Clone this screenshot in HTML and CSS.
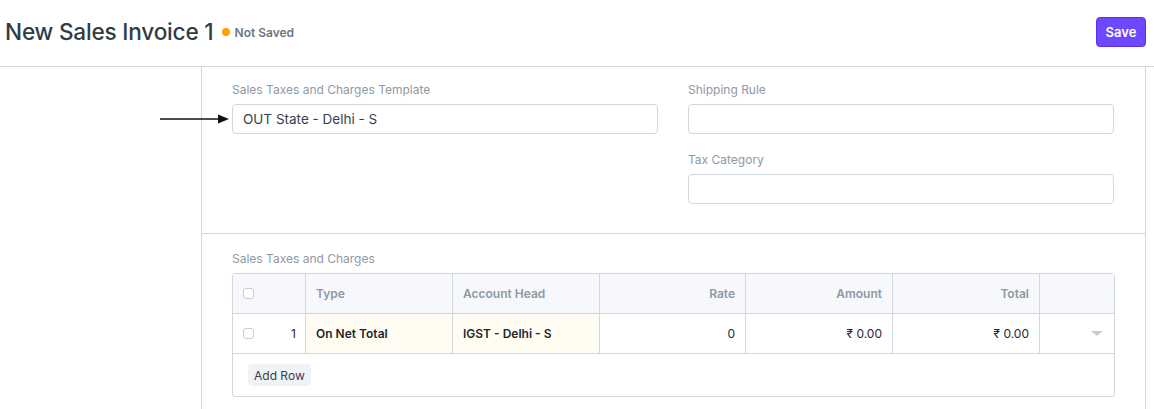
FILE: index.html
```html
<!DOCTYPE html>
<html>
<head>
<meta charset="utf-8">
<link rel="stylesheet" href="styles.css">
</head>
<body>
<div class="page">
  <header class="page-head">
    <div class="title-area">
      <h1 class="title">New Sales Invoice 1</h1>
      <span class="indicator"><span class="dot"></span>Not Saved</span>
    </div>
    <button class="btn-primary">Save</button>
  </header>
  <div class="layout">
    <aside class="sidebar"></aside>
    <main class="form">
      <section class="form-section cols">
        <div class="col">
          <div class="field">
            <label class="label">Sales Taxes and Charges Template</label>
            <div class="input">OUT State - Delhi - S</div>
          </div>
        </div>
        <div class="col">
          <div class="field">
            <label class="label">Shipping Rule</label>
            <div class="input"></div>
          </div>
          <div class="field">
            <label class="label">Tax Category</label>
            <div class="input"></div>
          </div>
        </div>
      </section>
      <section class="form-section">
        <label class="label">Sales Taxes and Charges</label>
        <div class="grid">
          <div class="grid-row head">
            <div class="cell cb"><span class="checkbox"></span></div>
            <div class="cell">Type</div>
            <div class="cell">Account Head</div>
            <div class="cell right">Rate</div>
            <div class="cell right">Amount</div>
            <div class="cell right">Total</div>
            <div class="cell"></div>
          </div>
          <div class="grid-row body">
            <div class="cell cb"><span class="checkbox"></span><span class="idx">1</span></div>
            <div class="cell req bold">On Net Total</div>
            <div class="cell req bold">IGST - Delhi - S</div>
            <div class="cell right">0</div>
            <div class="cell right">₹ 0.00</div>
            <div class="cell right">₹ 0.00</div>
            <div class="cell right"><span class="caret"></span></div>
          </div>
          <div class="grid-foot">
            <button class="btn-small">Add Row</button>
          </div>
        </div>
      </section>
    </main>
  </div>
  <svg class="arrow" width="72" height="12" viewBox="0 0 72 12">
    <line x1="0" y1="6" x2="60" y2="6" stroke="#111" stroke-width="1.6"/>
    <polygon points="58,1.5 69,6 58,10.5" fill="#111"/>
  </svg>
</div>
</body>
</html>
```

FILE: styles.css
```css
* { box-sizing: border-box; }
html, body { margin: 0; padding: 0; background: #fff; }
body {
  font-family: Inter, "Noto Sans", "Liberation Sans", sans-serif;
  color: #1f272e;
  font-size: 13px;
}
.page { position: relative; width: 1154px; height: 409px; overflow: hidden; }

.page-head {
  height: 67px;
  border-bottom: 1px solid #d1d8dd;
  display: flex;
  align-items: flex-start;
  justify-content: space-between;
  padding: 0 8px 0 5px;
}
.title-area { display: flex; align-items: center; margin-top: 18px; height: 28px; }
.title {
  margin: 0;
  font-size: 22.6px;
  font-weight: 500;
  color: #333c44;
  letter-spacing: -0.2px;
  line-height: 28px;
}
.indicator {
  display: flex;
  align-items: center;
  margin-left: 8px;
  font-size: 12px;
  font-weight: 600;
  color: #6c7680;
}
.dot {
  width: 8px; height: 8px; border-radius: 50%;
  background: #ffa00a;
  margin-right: 5px;
}
.btn-primary {
  margin-top: 17px;
  width: 50px; height: 30px;
  background: #6e48ff;
  border: 1px solid #5a2ff0;
  border-radius: 4px;
  color: #fff;
  font-family: inherit;
  font-size: 13px;
  font-weight: 600;
  padding: 0;
}

.layout { display: flex; height: 342px; }
.sidebar { width: 201px; flex: none; }
.form {
  width: 945px;
  flex: none;
  border-left: 1px solid #d1d8dd;
  border-right: 1px solid #d1d8dd;
}
.form-section {
  padding: 15px 31px 30px 30px;
  border-bottom: 1px solid #d1d8dd;
}
.form-section.cols { display: flex; gap: 30px; height: 167px; }
.form-section + .form-section { padding-top: 17px; border-bottom: none; }
.col { flex: 1; }
.field { margin-bottom: 18px; }
.label {
  display: block;
  font-size: 12px;
  line-height: 16px;
  color: #8d99a6;
  margin-bottom: 6px;
}
.input {
  height: 30px;
  border: 1px solid #d1d8dd;
  border-radius: 4px;
  padding: 0 10px;
  font-size: 13.5px;
  line-height: 28px;
  color: #36414c;
}

.grid {
  border: 1px solid #d1d8dd;
  border-radius: 3px;
  width: 883px;
}
.grid-row {
  display: grid;
  grid-template-columns: 72px 147px 147px 146px 147px 147px 1fr;
  height: 40px;
  border-bottom: 1px solid #d1d8dd;
}
.grid-row.head { background: #f6f8fb; }
.cell {
  display: flex;
  align-items: center;
  padding: 0 10px;
  font-size: 12px;
  border-left: 1px solid #d1d8dd;
}
.cell:first-child { border-left: none; }
.head .cell { color: #8d99a6; font-weight: 600; }
.body .cell { color: #1f272e; }
.cell.right { justify-content: flex-end; }
.cell.req { background: #fffdf2; }
.cell.bold { font-weight: 600; }
.cell.cb { justify-content: space-between; padding: 0 9px 0 10px; }
.checkbox {
  width: 11px; height: 11px;
  border: 1px solid #c6ccd2;
  border-radius: 3px;
  background: #fff;
}
.idx { font-size: 12px; }
.caret {
  width: 0; height: 0;
  border-left: 6px solid transparent;
  border-right: 6px solid transparent;
  border-top: 5px solid #c8ccd1;
  margin-right: 1px;
}
.grid-foot { padding: 10px 15px; height: 42px; }
.btn-small {
  height: 22px;
  padding: 0 6px;
  background: #f0f3f6;
  border: none;
  border-radius: 4px;
  font-family: inherit;
  font-size: 12px;
  color: #36414c;
}

.arrow { position: absolute; left: 160px; top: 113px; }
```
